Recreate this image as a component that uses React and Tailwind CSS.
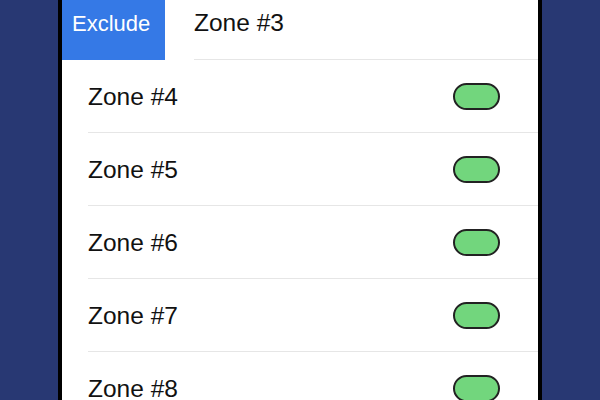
const zones = [4, 5, 6, 7, 8, 9];

function Toggle() {
  return <div className="w-[47px] h-[27px] rounded-full bg-[#72d67d] border-2 border-[#222]" />;
}

export default function App() {
  return (
    <div className="w-[600px] h-[400px] overflow-hidden bg-[#283873] flex justify-center font-['Liberation_Sans',Arial,sans-serif]">
      <div className="w-[484px] h-full border-x-4 border-black bg-white overflow-hidden">
        <div className="-mt-[13px] h-[73px] flex">
          <div className="w-[103px] shrink-0 bg-[#3579e6] text-white text-[22px] flex items-center pl-[10px]">
            Exclude
          </div>
          <div className="flex-1 ml-[29px] border-b border-[#e6e6e6] flex items-center text-[24.5px] text-[#111]">
            Zone #3
          </div>
        </div>
        {zones.map((n) => (
          <div key={n} className="h-[73px] pl-[26px]">
            <div className="h-full border-b border-[#e6e6e6] flex items-center justify-between pr-[38px]">
              <span className="text-[24.5px] text-[#111] pt-[2px]">Zone #{n}</span>
              <Toggle />
            </div>
          </div>
        ))}
      </div>
    </div>
  );
}
